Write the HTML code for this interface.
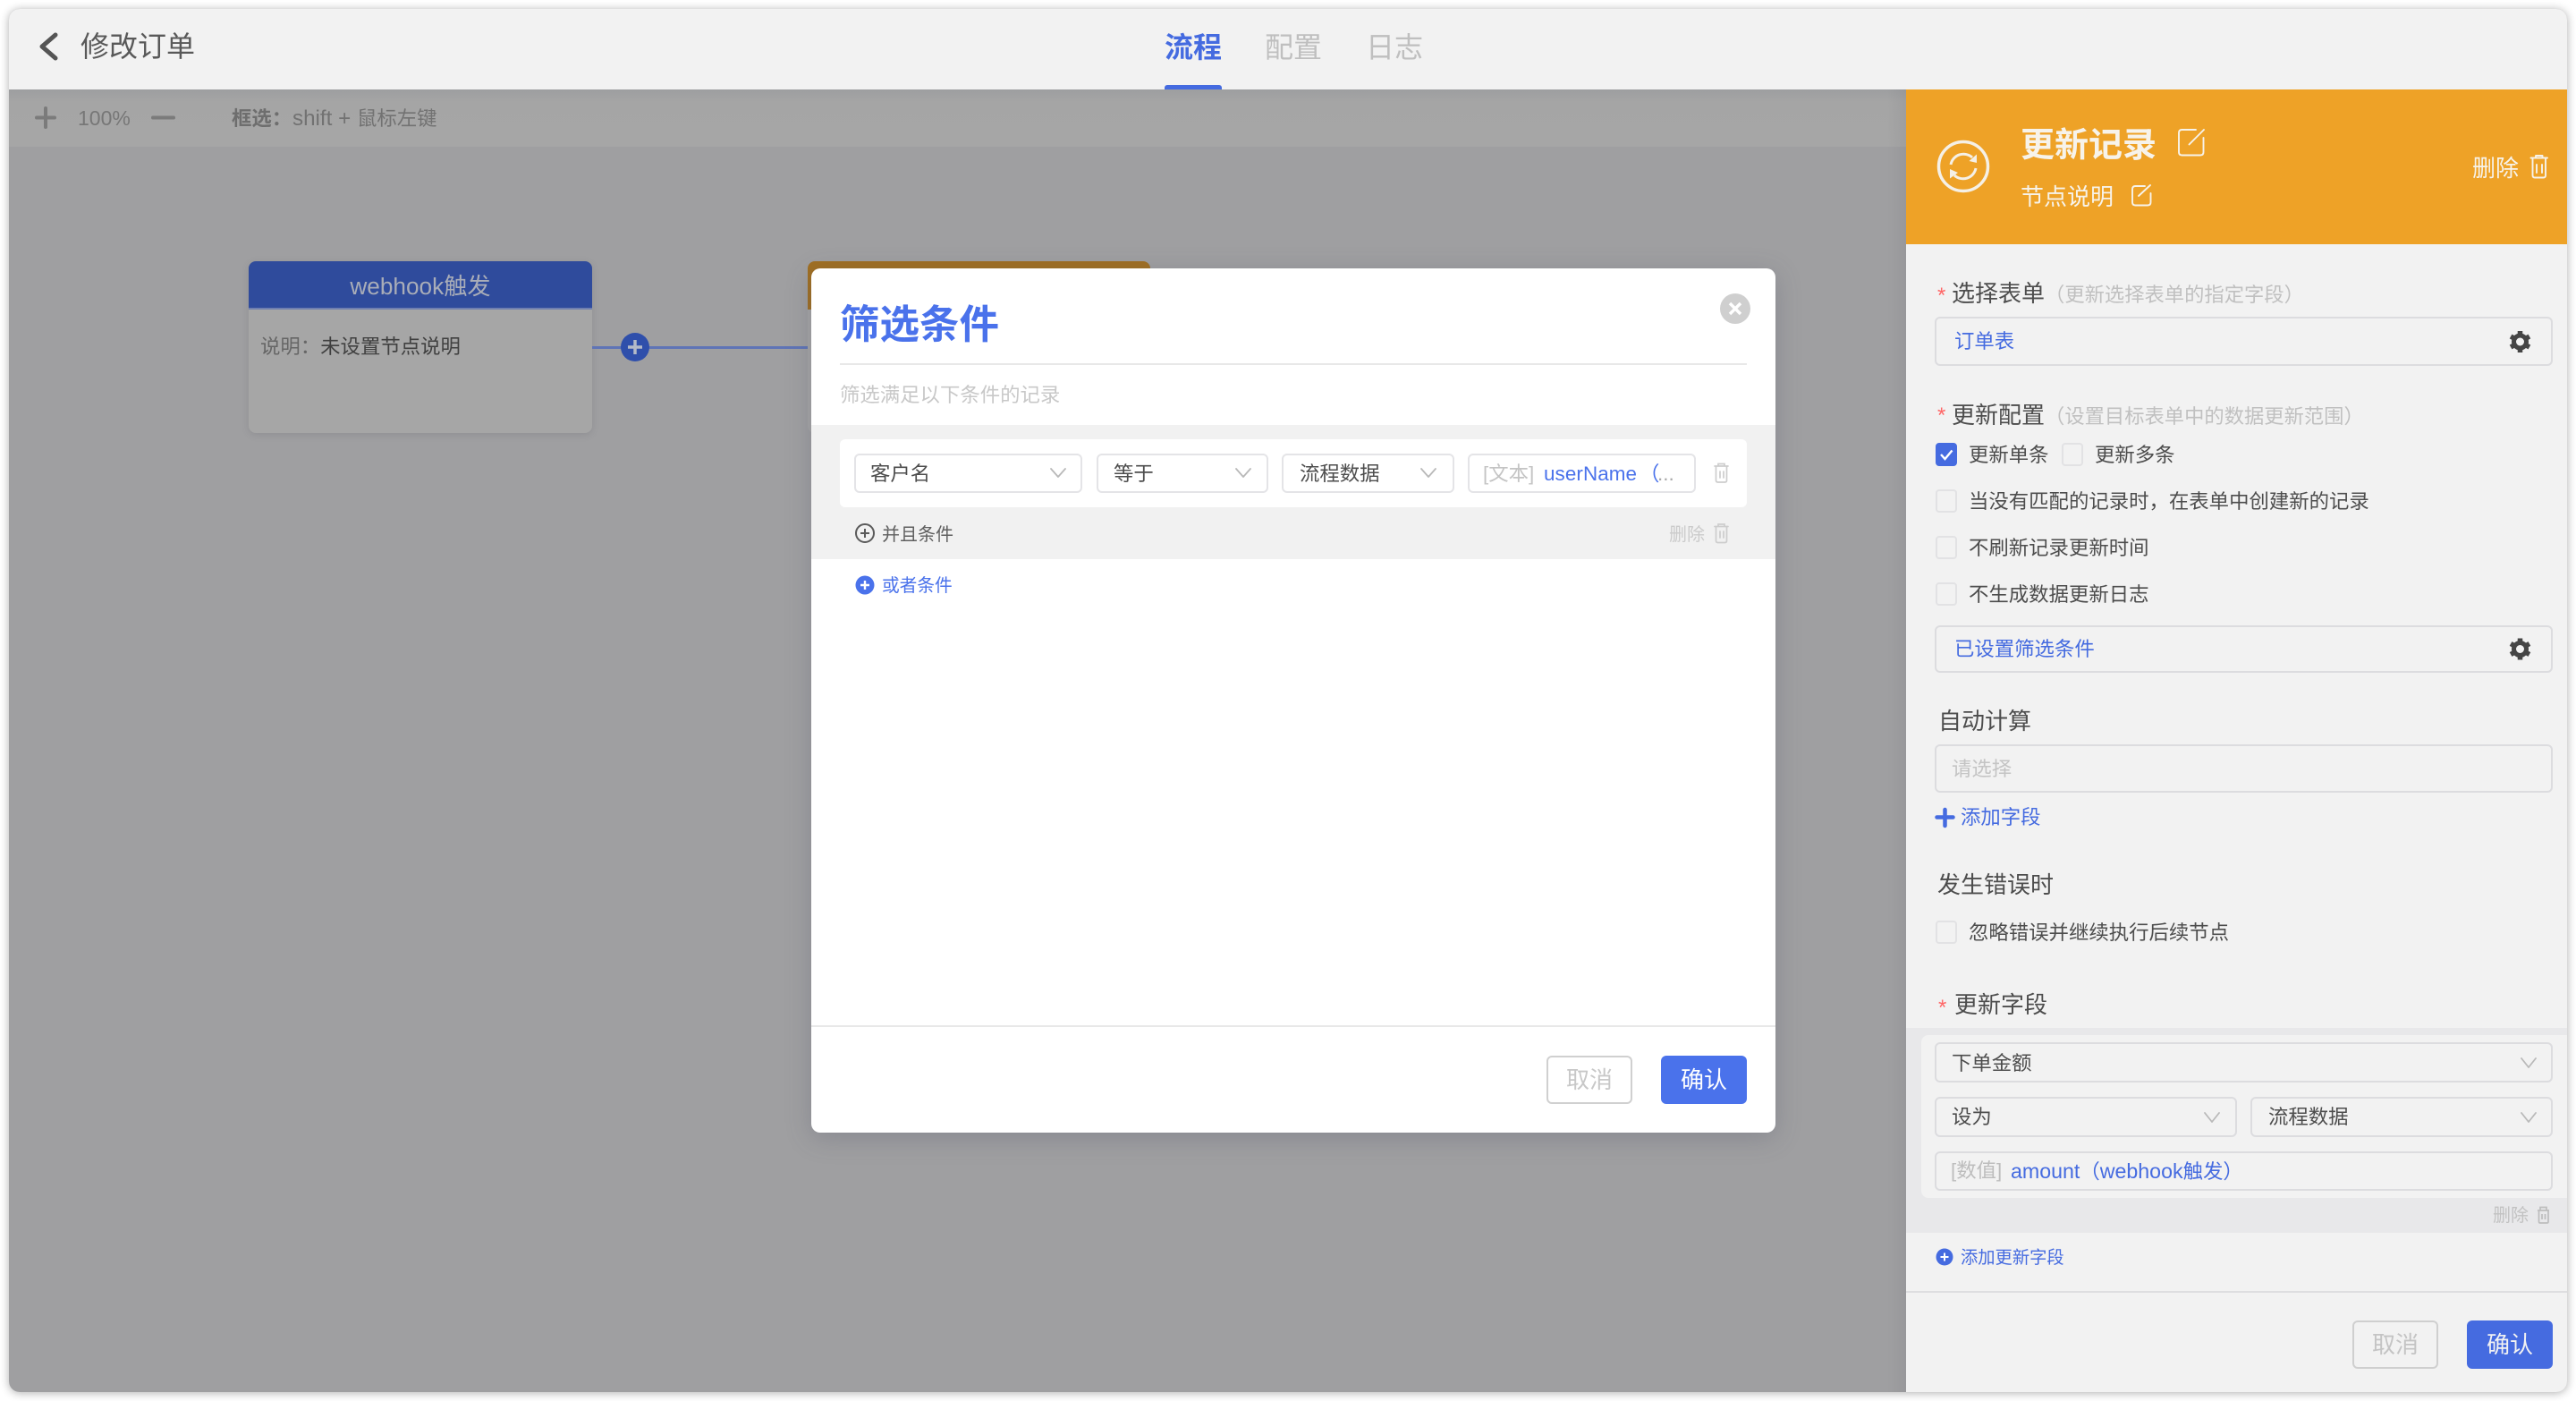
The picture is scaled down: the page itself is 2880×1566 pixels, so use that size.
<!DOCTYPE html>
<html lang="zh-CN"><head><meta charset="utf-8"><title>修改订单</title>
<style>
*{box-sizing:border-box}
html,body{margin:0;padding:0;width:2880px;height:1566px;overflow:hidden;background:#fff;font-family:"Liberation Sans","Noto Sans CJK SC",sans-serif}
.a{position:absolute}
.t{position:absolute;white-space:nowrap;line-height:40px;height:40px;font-size:22.4px;color:#4d4d4d;margin-top:1px}
.blue{color:#456be0}
.hint{color:#bdbdbd}
.box{position:absolute;border:2px solid #dcdcdf;border-radius:6px}
.cb{position:absolute;width:24px;height:26px;border:2px solid #e2e2e4;border-radius:4px;left:2164px}
svg{position:absolute;overflow:visible;fill:none}
</style></head><body>
<div class="a" style="left:10px;top:10px;width:2860px;height:1546px;border-radius:12px;box-shadow:0 1px 10px rgba(0,0,0,.32)"></div>
<div class="a" style="left:10px;top:10px;width:2860px;height:1546px;border-radius:12px;overflow:hidden;background:#9f9fa1">
<div class="a" style="left:0;top:0;width:2860px;height:90px;background:#f2f2f2"></div>
<div class="a" style="left:0;top:90px;width:2121px;height:64px;background:linear-gradient(#9d9ea0,#a5a5a5 22%,#a6a6a6)"></div>
<div class="a" style="left:2100px;top:90px;width:21px;height:1456px;background:linear-gradient(90deg,rgba(0,0,0,0),rgba(60,60,70,.07))"></div>
</div>

<svg style="left:0;top:0" width="100" height="100"><path d="M62 39 47 52 62 65" stroke="#555" stroke-width="5" stroke-linecap="round" stroke-linejoin="round"/></svg>
<div class="t" style="left:90px;top:31px;font-size:32px;color:#595959">修改订单</div>
<div class="t" style="left:1302px;top:32px;font-size:32px;color:#456be0;font-weight:700">流程</div>
<div class="t" style="left:1414px;top:32px;font-size:32px;color:#bfbfbf">配置</div>
<div class="t" style="left:1527px;top:32px;font-size:32px;color:#bfbfbf">日志</div>
<div class="a" style="left:1302px;top:95px;width:64px;height:5px;background:#456be0;border-radius:3px 3px 0 0"></div>

<svg style="left:0;top:100px" width="500" height="64"><path d="M51 21V42M41 31.500H61M171 31.500H194" stroke="#7b7b7b" stroke-width="4" stroke-linecap="round"/></svg>
<div class="t" style="left:87px;top:111px;color:#777;font-size:23px">100%</div>
<div class="t" style="left:259px;top:112px;color:#6e6e6e;font-weight:700">框选：</div>
<div class="t" style="left:327px;top:112px;color:#727272"><span style="font-size:24.200px">shift + </span>鼠标左键</div>

<div class="a" style="left:278px;top:292px;width:384px;height:192px;background:#a6a6a6;border-radius:8px;box-shadow:0 2px 8px rgba(80,80,90,.18);overflow:hidden">
<div class="a" style="left:0;top:0;width:384px;height:54px;background:#2f4b9c;border-bottom:2px solid #6f7fb0"></div>
</div>
<div class="t" style="left:278px;width:384px;text-align:center;top:299px;font-size:26.200px;color:#a9adb8">webhook触发</div>
<div class="t" style="left:291px;top:367px;color:#555"><span style="color:#666">说明：</span><span style="color:#404040">未设置节点说明</span></div>
<div class="a" style="left:662px;top:387px;width:250px;height:3px;background:#5f74b6"></div>
<div class="a" style="left:694px;top:372px;width:32px;height:32px;border-radius:50%;background:#2f4fab"></div>
<svg style="left:694px;top:372px" width="32" height="32"><path d="M16 8V24M8 16H24" stroke="#b4bac8" stroke-width="3.500"/></svg>

<div class="a" style="left:903px;top:292px;width:383px;height:192px;background:#a6a6a6;border-radius:8px;overflow:hidden"><div class="a" style="left:0;top:0;width:383px;height:54px;background:#a06f22"></div></div>

<div class="a" style="left:907px;top:300px;width:1078px;height:966px;background:#fff;border-radius:10px;box-shadow:0 6px 28px rgba(75,80,100,.28)">
<div class="a" style="left:0;top:175px;width:1078px;height:150px;background:#f1f1f1"></div>
<div class="a" style="left:32px;top:106px;width:1014px;height:2px;background:#e8e8e8"></div>
<div class="a" style="left:32px;top:191px;width:1014px;height:76px;background:#fff;border-radius:6px"></div>
<div class="a" style="left:0;top:846px;width:1078px;height:2px;background:#e8e8e8"></div>
</div>
<div class="t" style="left:939px;top:343px;font-size:44.500px;font-weight:700;color:#4a72eb">筛选条件</div>
<div class="a" style="left:1923px;top:328px;width:34px;height:34px;border-radius:50%;background:#cfcfcf"></div>
<svg style="left:1923px;top:328px" width="34" height="34"><path d="M11 11 23 23M23 11 11 23" stroke="#fff" stroke-width="3.500"/></svg>
<div class="t hint" style="left:939px;top:421px;color:#c8c8c8">筛选满足以下条件的记录</div>

<div class="box" style="left:955px;top:507px;width:255px;height:44px;border-color:#e4e4e7"></div>
<div class="box" style="left:1226px;top:507px;width:192px;height:44px;border-color:#e4e4e7"></div>
<div class="box" style="left:1433px;top:507px;width:193px;height:44px;border-color:#e4e4e7"></div>
<div class="box" style="left:1641px;top:507px;width:255px;height:44px;border-color:#e4e4e7"></div>
<div class="t" style="left:973px;top:509px">客户名</div>
<div class="t" style="left:1245px;top:509px">等于</div>
<div class="t" style="left:1453px;top:509px">流程数据</div>
<div class="t" style="left:1658px;top:509px;color:#c4c4c4">[文本]</div>
<div class="t" style="left:1726px;top:509px;color:#4a72eb;letter-spacing:.1px">userName</div>
<div class="t" style="left:1833px;top:509px;color:#4a72eb">（</div>
<div class="t" style="left:1853px;top:509px;color:#a8a8a8">...</div>
<svg style="left:0;top:0" width="2000" height="700"><g stroke="#b9b9b9" stroke-width="1.800" stroke-linecap="round" stroke-linejoin="round"><path d="M1175 524 1183 533 1191 524M1382 524 1390 533 1398 524M1589 524 1597 533 1605 524"/></g>
<g stroke="#cdcdcd" stroke-width="1.700" stroke-linecap="round"><path d="M1917 521H1932M1921 521V518.500H1928V521M1918.500 521V537Q1918.500 539 1920.500 539H1928.500Q1930.500 539 1930.500 537V521M1923 527V534M1927 527V534"/><path d="M1917 588.500H1932M1921 588.500V586H1928V588.500M1918.500 588.500V604.500Q1918.500 606.500 1920.500 606.500H1928.500Q1930.500 606.500 1930.500 604.500V588.500M1923 594V601M1927 594V601"/></g>
<circle cx="967" cy="596" r="10" stroke="#5a5a5a" stroke-width="2"/><path d="M967 591V601M962 596H972" stroke="#5a5a5a" stroke-width="2"/>
<circle cx="967" cy="654" r="10.500" fill="#4a72eb"/><path d="M967 649V659M962 654H972" stroke="#fff" stroke-width="2.400"/></svg>
<div class="t" style="left:986px;top:577px;font-size:20px;color:#5f5f5f">并且条件</div>
<div class="t" style="left:1866px;top:577px;font-size:20px;color:#cbcbcb">删除</div>
<div class="t" style="left:986px;top:634px;font-size:19.700px;color:#4a72eb">或者条件</div>
<div class="box" style="left:1729px;top:1180px;width:96px;height:54px;border-color:#d0d0d0;background:#fff"></div>
<div class="t" style="left:1729px;width:96px;text-align:center;top:1186px;font-size:26px;color:#c8c8c8">取消</div>
<div class="a" style="left:1857px;top:1180px;width:96px;height:54px;background:#4a72eb;border-radius:6px"></div>
<div class="t" style="left:1857px;width:96px;text-align:center;top:1186px;font-size:26px;color:#fff">确认</div>

<div class="a" style="left:2131px;top:100px;width:739px;height:1456px;background:#f2f2f2;border-radius:0 0 12px 0;overflow:hidden">
<div class="a" style="left:0;top:0;width:739px;height:173px;background:#eea227"></div>
<div class="a" style="left:0;top:1049px;width:739px;height:229px;background:#e8e8ea"></div>
<div class="a" style="left:17px;top:1057px;width:722px;height:182px;background:#f2f2f2;border-radius:8px 0 0 8px"></div>
<div class="a" style="left:0;top:1343px;width:739px;height:2px;background:#dedee0"></div>
</div>
<svg style="left:0;top:0" width="2880" height="300"><circle cx="2195" cy="186" r="27.500" stroke="#f5f0e6" stroke-width="3.500"/>
<path d="M2181 184A14.500 14.500 0 0 1 2205 176M2209 188A14.500 14.500 0 0 1 2185 196" stroke="#f5f0e6" stroke-width="3"/>
<path d="M2210 172.500V182L2201.500 180ZM2180 189V199.500L2189 193Z" fill="#f5f0e6"/>
<g stroke="#f7f3ea" stroke-width="1.900" stroke-linecap="round" stroke-linejoin="round"><path d="M2455 145H2439.500Q2436 145 2436 148.500V170Q2436 173.500 2439.500 173.500H2460Q2463.500 173.500 2463.500 170V154"/><path d="M2447.500 161.500 2464 145"/>
<path d="M2398 208H2387.500Q2384 208 2384 211.500V226Q2384 229.500 2387.500 229.500H2401Q2404.500 229.500 2404.500 226V216"/><path d="M2391 219 2404 207"/>
<path d="M2829.500 176.500H2848M2835 176.500V174H2842.500V176.500M2831.500 176.500V196Q2831.500 198.500 2834 198.500H2843.500Q2846 198.500 2846 196V176.500M2836 184V193M2842 184V193"/></g></svg>
<div class="t" style="left:2259px;top:142px;font-size:38px;font-weight:700;color:#f7f3ea">更新记录</div>
<div class="t" style="left:2259px;top:199px;font-size:26px;color:#f7f3ea">节点说明</div>
<div class="t" style="left:2764px;top:167px;font-size:26px;color:#f7f3ea">删除</div>

<div class="t" style="left:2166px;top:310px;font-size:24px;color:#f66">*</div>
<div class="t" style="left:2182px;top:307px;font-size:26px">选择表单<span class="hint" style="font-size:22.300px;color:#c0c0c0">（更新选择表单的指定字段）</span></div>
<div class="box" style="left:2163px;top:354px;width:691px;height:55px"></div>
<div class="t blue" style="left:2185px;top:361px">订单表</div>
<div class="t" style="left:2166px;top:444px;font-size:24px;color:#f66">*</div>
<div class="t" style="left:2182px;top:443px;font-size:26px">更新配置<span class="hint" style="font-size:22.300px;color:#c0c0c0">（设置目标表单中的数据更新范围）</span></div>

<div class="cb" style="top:495px;background:#456be0;border-color:#456be0"></div>
<svg style="left:2164px;top:495px" width="24" height="26"><path d="M6 13 10.500 18 18.500 8.500" stroke="#fff" stroke-width="2.400"/></svg>
<div class="t" style="left:2201px;top:488px">更新单条</div>
<div class="cb" style="left:2305px;top:495px"></div>
<div class="t" style="left:2342px;top:488px">更新多条</div>
<div class="cb" style="top:547px"></div>
<div class="t" style="left:2201px;top:540px">当没有匹配的记录时，在表单中创建新的记录</div>
<div class="cb" style="top:599px"></div>
<div class="t" style="left:2201px;top:592px">不刷新记录更新时间</div>
<div class="cb" style="top:651px"></div>
<div class="t" style="left:2201px;top:644px">不生成数据更新日志</div>
<div class="box" style="left:2163px;top:699px;width:691px;height:53px"></div>
<div class="t blue" style="left:2185px;top:705px">已设置筛选条件</div>
<svg style="left:0;top:0" width="2880" height="800"><g stroke="#454545">
<g transform="translate(2817.500 382)"><circle r="7" stroke-width="5"/><path d="M0-8V-12M0 8V12M6.900-4 10.400-6M6.900 4 10.400 6M-6.900-4-10.400-6M-6.900 4-10.400 6" stroke-width="5.500"/></g>
<g transform="translate(2817.500 725.500)"><circle r="7" stroke-width="5"/><path d="M0-8V-12M0 8V12M6.900-4 10.400-6M6.900 4 10.400 6M-6.900-4-10.400-6M-6.900 4-10.400 6" stroke-width="5.500"/></g>
</g></svg>

<div class="t" style="left:2167px;top:785px;font-size:26px">自动计算</div>
<div class="box" style="left:2163px;top:832px;width:691px;height:54px"></div>
<div class="t" style="left:2182px;top:839px;color:#c4c4c4">请选择</div>
<svg style="left:2160px;top:900px" width="30" height="30"><path d="M14.500 5V23M5.500 13.500H23.500" stroke="#456be0" stroke-width="4.500" stroke-linecap="round"/></svg>
<div class="t blue" style="left:2192px;top:893px">添加字段</div>
<div class="t" style="left:2166px;top:968px;font-size:26px">发生错误时</div>
<div class="cb" style="top:1029px"></div>
<div class="t" style="left:2201px;top:1022px">忽略错误并继续执行后续节点</div>
<div class="t" style="left:2167px;top:1106px;font-size:24px;color:#f66">*</div>
<div class="t" style="left:2185px;top:1102px;font-size:26px">更新字段</div>

<div class="box" style="left:2163px;top:1165px;width:691px;height:45px"></div>
<div class="t" style="left:2182px;top:1168px">下单金额</div>
<div class="box" style="left:2163px;top:1226px;width:338px;height:45px"></div>
<div class="t" style="left:2182px;top:1228px">设为</div>
<div class="box" style="left:2516px;top:1226px;width:338px;height:45px"></div>
<div class="t" style="left:2536px;top:1228px">流程数据</div>
<div class="box" style="left:2163px;top:1287px;width:691px;height:44px"></div>
<div class="t" style="left:2181px;top:1288px;color:#bdbdbd">[数值]</div>
<div class="t blue" style="left:2248px;top:1288px"><span style="font-size:23.200px">amount</span>（<span style="font-size:23.200px">webhook</span>触发）</div>
<svg style="left:0;top:1100px" width="2880" height="340"><g stroke="#b9b9b9" stroke-width="1.800" stroke-linecap="round" stroke-linejoin="round"><path d="M2819 83 2827 93 2835 83M2465 144 2473 154 2481 144M2819 144 2827 154 2835 144"/></g>
<path d="M2837 253H2850M2840 253V249.500H2847V253M2838.500 253V265.500Q2838.500 267 2840 267H2847.500Q2849 267 2849 265.500V253M2842 257V263M2845.500 257V263" stroke="#bdbdbd" stroke-width="1.700"/>
<circle cx="2174" cy="305" r="9.500" fill="#456be0"/><path d="M2174 300.500V309.500M2169.500 305H2178.500" stroke="#fff" stroke-width="2"/></svg>
<div class="t" style="left:2787px;top:1338px;font-size:20px;color:#c2c2c2">删除</div>
<div class="t blue" style="left:2192px;top:1386px;font-size:19.300px">添加更新字段</div>
<div class="box" style="left:2630px;top:1476px;width:96px;height:54px;border-color:#cfcfcf"></div>
<div class="t" style="left:2630px;width:96px;text-align:center;top:1482px;font-size:26px;color:#c4c4c4">取消</div>
<div class="a" style="left:2758px;top:1476px;width:96px;height:54px;background:#456be0;border-radius:6px"></div>
<div class="t" style="left:2758px;width:96px;text-align:center;top:1482px;font-size:26px;color:#f2f2f2">确认</div>
</body></html>
